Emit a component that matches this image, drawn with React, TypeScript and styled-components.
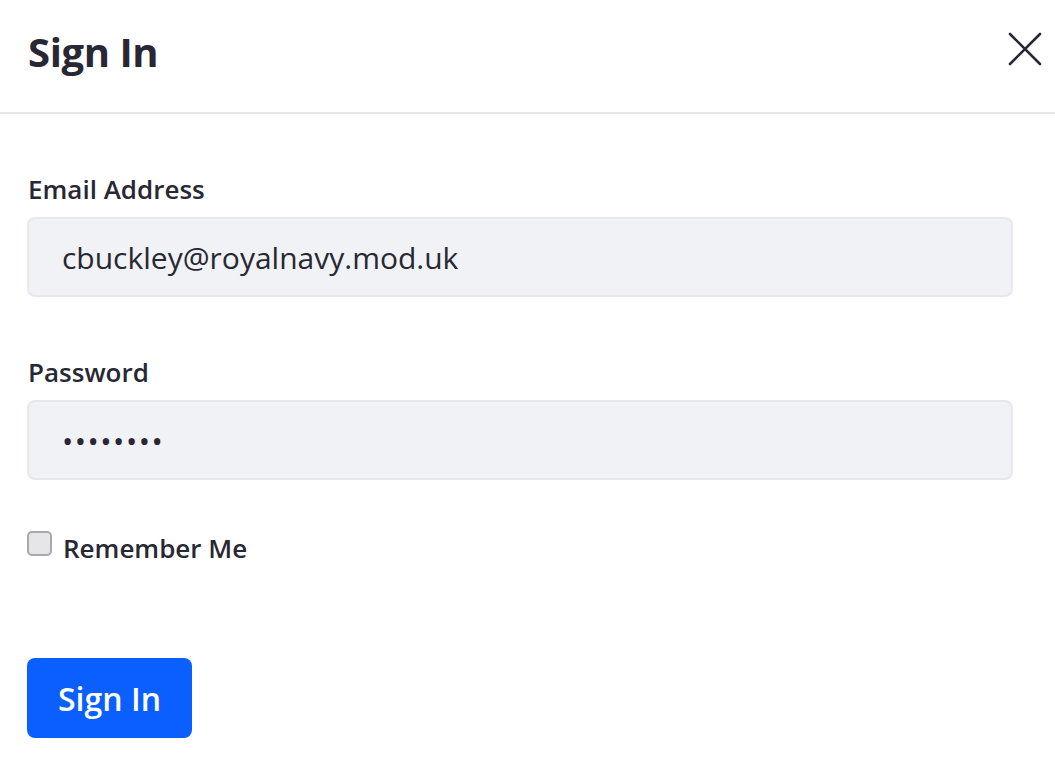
import React from 'react'
import styled, { createGlobalStyle } from 'styled-components'

const GlobalStyle = createGlobalStyle`
    html, body {
        margin: 0;
        padding: 0;
        background: #ffffff;
    }
    body {
        font-family: "Open Sans", "Noto Sans", "Liberation Sans", sans-serif;
        color: #272833;
    }
`

const Modal = styled.div`
    width: 1055px;
    height: 764px;
    background: #ffffff;
    display: flex;
    flex-direction: column;
    overflow: hidden;
`

const Header = styled.div`
    height: 114px;
    box-sizing: border-box;
    border-bottom: 2px solid #e7e7ed;
    display: flex;
    align-items: center;
    justify-content: space-between;
    padding: 0 12px 8px 28px;
`

const Title = styled.h1`
    margin: 0;
    font-size: 40px;
    line-height: 48px;
    font-weight: 700;
    letter-spacing: -0.4px;
    color: #272833;
`

const CloseButton = styled.button`
    width: 36px;
    height: 36px;
    padding: 0;
    border: none;
    background: transparent;
    display: flex;
    align-items: center;
    justify-content: center;
    cursor: pointer;
    margin-top: -7px;
`

const Body = styled.form`
    display: flex;
    flex-direction: column;
    padding: 59px 42px 0 27px;
`

const Group = styled.div<{ $gap: number }>`
    display: flex;
    flex-direction: column;
    margin-bottom: ${({ $gap }) => $gap}px;
`

const Label = styled.label`
    font-size: 26px;
    font-weight: 600;
    line-height: 32px;
    margin: 0 0 12px 1px;
    color: #272833;
`

const Input = styled.input<{ $secret?: boolean }>`
    height: 80px;
    box-sizing: border-box;
    border: 2px solid #e7e7ed;
    border-radius: 8px;
    background: #f1f2f5;
    padding: 0 33px;
    font-family: inherit;
    font-size: 30px;
    letter-spacing: ${({ $secret }) => ($secret ? '1.5px' : 'normal')};
    color: #272833;
    outline: none;
`

const CheckRow = styled.label`
    display: flex;
    align-items: center;
    gap: 11px;
    font-size: 26px;
    line-height: 36px;
    font-weight: 600;
    color: #272833;
    margin-bottom: 92px;
`

const Box = styled.span`
    width: 25px;
    height: 25px;
    box-sizing: border-box;
    border: 2px solid #a9a9ad;
    border-radius: 5px;
    background: #e6e6e8;
    margin-top: -9px;
`

const SubmitButton = styled.button`
    align-self: flex-start;
    width: 165px;
    height: 80px;
    border: none;
    border-radius: 8px;
    background: #0b5fff;
    color: #ffffff;
    font-family: inherit;
    font-size: 32px;
    font-weight: 600;
    cursor: pointer;
`

const App: React.FC = () => {
    return (
        <>
            <GlobalStyle />
            <Modal>
                <Header>
                    <Title>Sign In</Title>
                    <CloseButton type="button" aria-label="Close">
                        <svg width="34" height="34" viewBox="0 0 34 34" fill="none">
                            <path d="M2 2L32 32M32 2L2 32" stroke="#272833" strokeWidth="2.6" strokeLinecap="round" />
                        </svg>
                    </CloseButton>
                </Header>
                <Body onSubmit={(e) => e.preventDefault()}>
                    <Group $gap={59}>
                        <Label htmlFor="email">Email Address</Label>
                        <Input id="email" type="text" readOnly value="cbuckley@royalnavy.mod.uk" />
                    </Group>
                    <Group $gap={50}>
                        <Label htmlFor="password">Password</Label>
                        <Input id="password" type="password" $secret readOnly value="password" />
                    </Group>
                    <CheckRow>
                        <Box />
                        Remember Me
                    </CheckRow>
                    <SubmitButton type="submit">Sign In</SubmitButton>
                </Body>
            </Modal>
        </>
    )
}

export default App
